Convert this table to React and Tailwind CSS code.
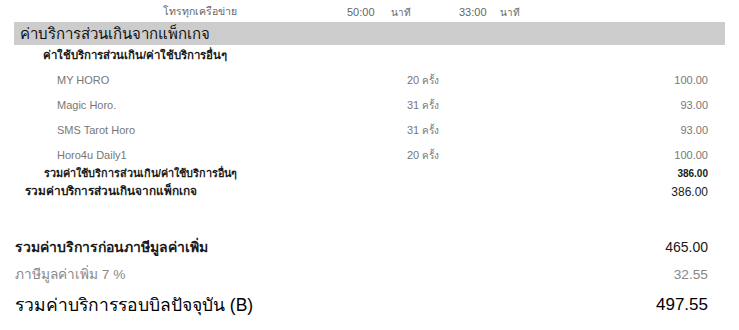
import React from 'react';

const items = [
  { name: 'MY HORO', count: '20 ครั้ง', amount: '100.00' },
  { name: 'Magic Horo.', count: '31 ครั้ง', amount: '93.00' },
  { name: 'SMS Tarot Horo', count: '31 ครั้ง', amount: '93.00' },
  { name: 'Horo4u Daily1', count: '20 ครั้ง', amount: '100.00' },
];

export default function App() {
  return (
    <div className="w-[739px] h-[330px] bg-white overflow-hidden font-['Liberation_Sans',sans-serif] text-[#1a1a1a]">
      {/* แถวโทรทุกเครือข่าย */}
      <div className="h-[24px] flex items-center pl-[163px] text-[11px] text-[#666]">
        <span className="w-[184px] text-[10.5px]">โทรทุกเครือข่าย</span>
        <span className="w-[44px]">50:00</span>
        <span className="w-[68px] text-[10px]">นาที</span>
        <span className="w-[41px]">33:00</span>
        <span className="text-[10px]">นาที</span>
      </div>

      {/* หัวข้อ */}
      <div className="ml-[14px] w-[711px] h-[23px] -mt-[2px] bg-[#cccccc] flex items-center pl-[6px] text-[15px] leading-none text-[#111]">
        ค่าบริการส่วนเกินจากแพ็กเกจ
      </div>

      <div className="h-[22px] flex items-center pl-[43px] text-[11.4px] font-bold">
        ค่าใช้บริการส่วนเกิน/ค่าใช้บริการอื่นๆ
      </div>

      <div className="pt-[1px]">
        {items.map((it) => (
          <div key={it.name} className="h-[25px] flex items-center pl-[57px] pr-[31px] text-[11px] text-[#777]">
            <span className="w-[350px]">{it.name}</span>
            <span>
              {it.count.split(' ')[0]} <span className="text-[10px]">{it.count.split(' ')[1]}</span>
            </span>
            <span className="ml-auto">{it.amount}</span>
          </div>
        ))}
      </div>

      <div className="h-[14px] -mt-[2px] flex items-center pl-[44px] pr-[31px] text-[10.8px] font-bold">
        <span>รวมค่าใช้บริการส่วนเกิน/ค่าใช้บริการอื่นๆ</span>
        <span className="ml-auto text-[10px]">386.00</span>
      </div>
      <div className="h-[24px] flex items-center pl-[25px] pr-[31px] text-[11.8px] font-bold">
        <span>รวมค่าบริการส่วนเกินจากแพ็กเกจ</span>
        <span className="ml-auto text-[12px] font-normal">386.00</span>
      </div>

      <div className="mt-[30px] h-[26px] flex items-center pl-[15px] pr-[31px] text-[14px] font-bold">
        <span>รวมค่าบริการก่อนภาษีมูลค่าเพิ่ม</span>
        <span className="ml-auto text-[14px] font-normal">465.00</span>
      </div>
      <div className="h-[30px] flex items-center pl-[15px] pr-[31px] text-[13.7px] text-[#888]">
        <span>ภาษีมูลค่าเพิ่ม 7 %</span>
        <span className="ml-auto">32.55</span>
      </div>
      <div className="h-[30px] flex items-center pl-[15px] pr-[31px] text-[17.5px] text-black">
        <span>รวมค่าบริการรอบบิลปัจจุบัน (B)</span>
        <span className="ml-auto text-[17px]">497.55</span>
      </div>
    </div>
  );
}
